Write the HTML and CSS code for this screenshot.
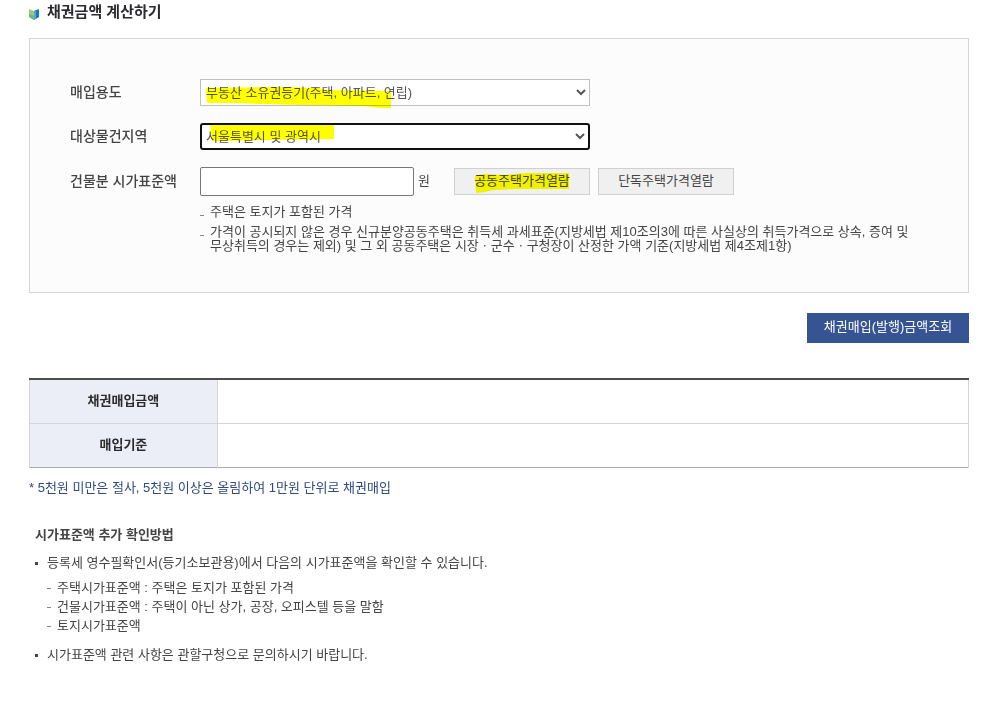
FILE: index.html
```html
<!DOCTYPE html>
<html lang="ko">
  <head>
    <meta charset="UTF-8" />
    <meta name="viewport" content="width=device-width, initial-scale=1.0" />
    <title>채권금액 계산하기</title>
    <link rel="stylesheet" href="styles.css">
  </head>
  <body>
    <main class="container">
      <h1 class="title">
        <svg class="title-icon" width="12" height="12" viewBox="0 0 12 12" aria-hidden="true">
          <path d="M0 1 L5 3 V12 L0 9 Z" fill="#9ccb6c" />
          <path d="M0 6 L5 8 V12 L0 9 Z" fill="#6db58c" />
          <path d="M5 3 L10 1 V9 L5 12 Z" fill="#1679bd" />
          <path d="M5 3 L7 2 V11 L5 12 Z" fill="#4fa9d4" />
        </svg>
        채권금액 계산하기
      </h1>

      <form>
        <div class="panel">
          <div class="row">
            <label class="row-label" for="purpose">매입용도</label>
            <div class="field">
              <select id="purpose">
                <option>부동산 소유권등기(주택, 아파트, 연립)</option>
              </select>
              <svg class="marker marker-purpose" width="186" height="22" viewBox="0 0 186 22" aria-hidden="true">
                <path d="M1 1 L70 0 L114 1 L119 3 L186 4 V21 L175 21 L160 19 L95 18 L60 17 L30 16 L2 16 Z" />
              </svg>
            </div>
          </div>

          <div class="row">
            <label class="row-label" for="region">대상물건지역</label>
            <div class="field">
              <select id="region" class="current">
                <option>서울특별시 및 광역시</option>
              </select>
              <svg class="marker marker-region" width="124" height="16" viewBox="0 0 124 16" aria-hidden="true">
                <path d="M0 0 H124 V14 L60 15 L2 16 Z" />
              </svg>
            </div>
          </div>

          <div class="row">
            <label class="row-label" for="price">건물분 시가표준액</label>
            <div class="price">
              <input type="text" id="price" />
              <span class="unit">원</span>
              <button type="button" class="btn-view">
                공동주택가격열람
                <svg class="marker marker-view" width="94" height="20" viewBox="0 0 94 20" aria-hidden="true">
                  <path d="M0 3 L8 1 L30 2 L50 0 H94 V16 L40 16 L18 17 L10 19 L1 20 Z" />
                </svg>
              </button>
              <button type="button" class="btn-view">단독주택가격열람</button>
            </div>
          </div>

          <ul class="notes">
            <li>주택은 토지가 포함된 가격</li>
            <li>가격이 공시되지 않은 경우 신규분양공동주택은 취득세 과세표준(지방세법 제10조의3에 따른 사실상의 취득가격으로 상속, 증여 및 무상취득의 경우는 제외) 및 그 외 공동주택은 시장ㆍ군수ㆍ구청장이 산정한 가액 기준(지방세법 제4조제1항)</li>
          </ul>
        </div>

        <div class="actions">
          <button type="button" class="btn-search">채권매입(발행)금액조회</button>
        </div>
      </form>

      <table>
        <tbody>
          <tr>
            <th scope="row">채권매입금액</th>
            <td></td>
          </tr>
          <tr>
            <th scope="row">매입기준</th>
            <td></td>
          </tr>
        </tbody>
      </table>
      <p class="table-note">* 5천원 미만은 절사, 5천원 이상은 올림하여 1만원 단위로 채권매입</p>

      <section class="guide">
        <h2>시가표준액 추가 확인방법</h2>
        <ul class="guide-list">
          <li>
            등록세 영수필확인서(등기소보관용)에서 다음의 시가표준액을 확인할 수 있습니다.
            <ul class="sub-list">
              <li>주택시가표준액 : 주택은 토지가 포함된 가격</li>
              <li>건물시가표준액 : 주택이 아닌 상가, 공장, 오피스텔 등을 말함</li>
              <li>토지시가표준액</li>
            </ul>
          </li>
          <li>시가표준액 관련 사항은 관할구청으로 문의하시기 바랍니다.</li>
        </ul>
      </section>
    </main>
  </body>
</html>
```
FILE: styles.css
```css
:root {
  --text: #444;
  --dark: #2b2b2f;
  --line: #d5d5d5;
  --blue: #365493;
  --marker: #ff0;
}

* {
  box-sizing: border-box;
}

body {
  margin: 0;
  background: #fff;
  color: var(--text);
  font-family: "Liberation Sans", "Noto Sans CJK KR", sans-serif;
  font-size: 13px;
  line-height: 20px;
  word-break: keep-all;
}

ul {
  list-style: none;
  margin: 0;
  padding: 0;
}

button,
input,
select {
  font: inherit;
  color: inherit;
}

.container {
  padding: 0 29px 40px;
}

.title {
  display: flex;
  align-items: center;
  gap: 6px;
  margin: 0 0 12px;
  padding-bottom: 2px;
  font-size: 15px;
  line-height: 24px;
  font-weight: 700;
  color: var(--dark);
}

.title-icon {
  margin-top: 3px;
}

.panel {
  padding: 40px 40px 39px;
  border: 1px solid var(--line);
  background: #fcfcfc;
}

.row {
  display: flex;
  align-items: center;
  margin-bottom: 17px;
}

.row-label {
  flex: 0 0 130px;
  padding-bottom: 2px;
  font-size: 14px;
  font-weight: 500;
}

.field {
  position: relative;
  flex: 0 1 390px;
}

select {
  display: block;
  width: 100%;
  height: 27px;
  padding: 0 1px;
  border: 1px solid #c0c0c0;
  border-radius: 0;
  background-color: #fff;
  color: #555;
}

select.current {
  padding: 0;
  border: 2px solid #101010;
  border-radius: 3px;
}

.price {
  display: flex;
  align-items: center;
}

input[type="text"] {
  width: 214px;
  height: 29px;
  padding: 0 5px;
  border: 1px solid #767676;
  border-radius: 2px;
  background: #fff;
}

.unit {
  margin: 0 24px 0 4px;
  padding-bottom: 2px;
}

.btn-view {
  position: relative;
  width: 136px;
  height: 27px;
  margin-right: 8px;
  padding: 0 0 2px;
  border: 1px solid #d0d0d0;
  background: #f0f0f0;
}

/* highlighter strokes over the important choices */
.marker {
  position: absolute;
  fill: var(--marker);
  mix-blend-mode: multiply;
  pointer-events: none;
}

.marker-purpose {
  top: 8px;
  left: 5px;
}

.marker-region {
  top: 2px;
  left: 10px;
}

.marker-view {
  top: 4px;
  left: 20px;
}

.notes {
  margin: -8px 0 0 130px;
  line-height: 14px;
}

.notes li {
  display: flex;
  gap: 6px;
  margin-bottom: 6px;
}

.notes li:last-child {
  margin-bottom: 0;
}

.notes li::before {
  content: "";
  flex: 0 0 4px;
  height: 1px;
  margin-top: 10px;
  background: #888;
}

.actions {
  display: flex;
  justify-content: flex-end;
  margin: 20px 0 35px;
}

.btn-search {
  height: 30px;
  width: 162px;
  padding: 0 0 2px;
  border: none;
  background: var(--blue);
  color: #fff;
}

table {
  width: 100%;
  border-collapse: collapse;
  border-top: 2px solid #504c4c;
  border-bottom: 1px solid #aaa;
}

th,
td {
  height: 44px;
  padding: 0;
  border: 1px solid var(--line);
}

tr:first-child > * {
  border-top: none;
}

tr:last-child > * {
  border-bottom: none;
}

th {
  width: 20%;
  background: #ebeef6;
  color: var(--dark);
  font-weight: 700;
}

.table-note {
  margin: 10px 0 27px;
  color: #304a7e;
}

.guide {
  padding-left: 6px;
}

.guide h2 {
  margin: 0 0 8px;
  font-size: 13px;
  font-weight: 700;
}

.guide-list > li {
  padding-left: 12px;
  margin-bottom: 10px;
  background: linear-gradient(#444, #444) 0 9px / 3px 3px no-repeat;
}

.sub-list {
  padding-top: 5px;
  line-height: 19px;
}

.sub-list li {
  display: flex;
  gap: 6px;
}

.sub-list li::before {
  content: "";
  flex: 0 0 4px;
  height: 1px;
  margin-top: 10px;
  background: #888;
}
```
